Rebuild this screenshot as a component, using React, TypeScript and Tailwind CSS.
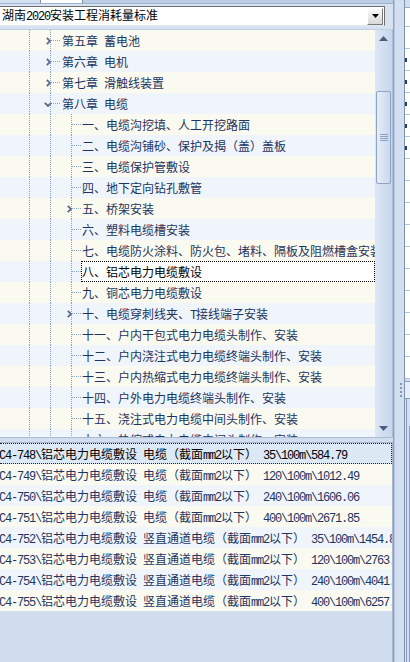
import React from 'react';

const FONT = "font-['Noto_Sans_CJK_SC','Noto_Sans_CJK_JP',sans-serif]";

function Mixed({ t }: { t: string }) {
  const parts = t.split(/([\x20-\x7E]+)/).filter((p) => p.length > 0);
  return (
    <>
      {parts.map((p, i) =>
        /^[\x20-\x7E]+$/.test(p) ? (
          <span key={i} className="font-['Liberation_Mono',monospace] text-[12px] tracking-[-1.2px]">
            {p}
          </span>
        ) : (
          <span key={i}>{p}</span>
        )
      )}
    </>
  );
}

type TRow = { l: 1 | 2; t: string; e?: 'r' | 'd'; sel?: boolean };

const treeRows: TRow[] = [
  { l: 1, t: '第五章 蓄电池', e: 'r' },
  { l: 1, t: '第六章 电机', e: 'r' },
  { l: 1, t: '第七章 滑触线装置', e: 'r' },
  { l: 1, t: '第八章 电缆', e: 'd' },
  { l: 2, t: '一、电缆沟挖填、人工开挖路面' },
  { l: 2, t: '二、电缆沟铺砂、保护及揭（盖）盖板' },
  { l: 2, t: '三、电缆保护管敷设' },
  { l: 2, t: '四、地下定向钻孔敷管' },
  { l: 2, t: '五、桥架安装', e: 'r' },
  { l: 2, t: '六、塑料电缆槽安装' },
  { l: 2, t: '七、电缆防火涂料、防火包、堵料、隔板及阻燃槽盒安装' },
  { l: 2, t: '八、铝芯电力电缆敷设', sel: true },
  { l: 2, t: '九、铜芯电力电缆敷设' },
  { l: 2, t: '十、电缆穿刺线夹、T接线端子安装', e: 'r' },
  { l: 2, t: '十一、户内干包式电力电缆头制作、安装' },
  { l: 2, t: '十二、户内浇注式电力电缆终端头制作、安装' },
  { l: 2, t: '十三、户内热缩式电力电缆终端头制作、安装' },
  { l: 2, t: '十四、户外电力电缆终端头制作、安装' },
  { l: 2, t: '十五、浇注式电力电缆中间头制作、安装' },
  { l: 2, t: '十六、热缩式电力电缆中间头制作、安装' },
];

const listItems: [string, string, string][] = [
  ['C4-748', '电缆（截面mm2以下）', '35\\100m\\584.79'],
  ['C4-749', '电缆（截面mm2以下）', '120\\100m\\1012.49'],
  ['C4-750', '电缆（截面mm2以下）', '240\\100m\\1606.06'],
  ['C4-751', '电缆（截面mm2以下）', '400\\100m\\2671.85'],
  ['C4-752', '竖直通道电缆（截面mm2以下）', '35\\100m\\1454.88'],
  ['C4-753', '竖直通道电缆（截面mm2以下）', '120\\100m\\2763.15'],
  ['C4-754', '竖直通道电缆（截面mm2以下）', '240\\100m\\4041.62'],
  ['C4-755', '竖直通道电缆（截面mm2以下）', '400\\100m\\6257.34'],
];

const DOT = 'border-[#8aa1c6] border-dotted';

function VLine() {
  return <div className={`absolute left-[10px] top-0 bottom-0 border-l ${DOT}`} />;
}
function HLine() {
  return <div className={`absolute left-[11px] right-[1px] top-[10px] border-t ${DOT}`} />;
}
function Expander({ e }: { e?: 'r' | 'd' }) {
  if (e === 'r')
    return (
      <svg className="absolute left-[6px] top-[7px]" width="5" height="8" viewBox="0 0 5 8">
        <path d="M0.8 0.8 L4 4 L0.8 7.2" stroke="#5a6b8c" strokeWidth="1.8" fill="none" />
      </svg>
    );
  if (e === 'd')
    return (
      <svg className="absolute left-[4px] top-[9px]" width="8" height="5" viewBox="0 0 8 5">
        <path d="M0.8 0.8 L4 4 L7.2 0.8" stroke="#5a6b8c" strokeWidth="1.8" fill="none" />
      </svg>
    );
  return null;
}

function TreeRow({ r, i }: { r: TRow; i: number }) {
  const bg = i % 2 === 0 ? 'bg-[#fbfaf1]' : 'bg-[#f0f4fb]';
  return (
    <div className={`flex h-[21px] shrink-0 ${bg}`}>
      <div className="w-[19px] shrink-0" />
      <div className="relative w-[21px] shrink-0">
        <VLine />
      </div>
      <div className="relative w-[21px] shrink-0">
        <VLine />
        {r.l === 1 && (
          <>
            <HLine />
            <Expander e={r.e} />
          </>
        )}
      </div>
      {r.l === 2 && (
        <div className="relative w-[21px] shrink-0">
          <VLine />
          <HLine />
          <Expander e={r.e} />
        </div>
      )}
      {r.sel ? (
        <div className="flex-1 -ml-px h-full bg-white border border-dotted border-black text-black leading-[19px] whitespace-nowrap">
          <Mixed t={r.t} />
        </div>
      ) : (
        <div className={`${r.l === 1 ? 'pl-px' : ''} leading-[21px] whitespace-nowrap text-[#1d3560]`}>
          <Mixed t={r.t} />
        </div>
      )}
    </div>
  );
}

function ScrollBar() {
  return (
    <div className="w-[17px] shrink-0 h-full flex flex-col bg-gradient-to-r from-[#dde7f5] to-[#c6d6eb]">
      <div className="h-[17px] flex items-center justify-center">
        <svg width="9" height="5" viewBox="0 0 9 5">
          <polygon points="4.5,0 9,5 0,5" fill="#4c5e80" />
        </svg>
      </div>
      <div className="h-[44px]" />
      <div className="h-[93px] mx-px rounded-[2px] border border-[#8ca4c6] bg-gradient-to-r from-[#e6eef9] to-[#c9d8ed] flex flex-col items-center justify-center gap-[1px]">
        <div className="w-[8px] h-px bg-[#8ca0c0]" />
        <div className="w-[8px] h-px bg-[#8ca0c0]" />
        <div className="w-[8px] h-px bg-[#8ca0c0]" />
        <div className="w-[8px] h-px bg-[#8ca0c0]" />
      </div>
      <div className="flex-1" />
      <div className="h-[17px] flex items-center justify-center">
        <svg width="9" height="5" viewBox="0 0 9 5">
          <polygon points="0,0 9,0 4.5,5" fill="#4c5e80" />
        </svg>
      </div>
    </div>
  );
}

function ListRow({ it, i }: { it: [string, string, string]; i: number }) {
  const sel = i === 0;
  const cls = sel
    ? 'bg-[#dde8f5] border-t border-b border-r border-dotted border-[#222] text-black leading-[19px]'
    : `${i % 2 === 1 ? 'bg-[#fbfaf1]' : 'bg-[#f0f4fb]'} text-[#1d3560] leading-[21px]`;
  const text = `${it[0]}\\铝芯电力电缆敷设 ${it[1]} ${it[2]}`;
  return (
    <div className={`h-[21px] shrink-0 overflow-hidden whitespace-nowrap ${cls}`}>
      <div className="-ml-px">
        <Mixed t={text} />
      </div>
    </div>
  );
}

function RightStrip() {
  const rows = Array.from({ length: 16 });
  return (
    <div className="w-[16px] shrink-0 flex">
      <div className="w-[10px] shrink-0 bg-[#d3dff0] border-l border-[#b4c5dd] flex flex-col">
        <div className="h-[383px]" />
        <div className="flex flex-col items-center gap-[2px] pl-[3px]">
          <div className="w-[2px] h-[2px] bg-[#8296b6]" />
          <div className="w-[2px] h-[2px] bg-[#8296b6]" />
          <div className="w-[2px] h-[2px] bg-[#8296b6]" />
          <div className="w-[2px] h-[2px] bg-[#8296b6]" />
        </div>
      </div>
      <div className="w-[6px] shrink-0 flex flex-col border-l border-[#7f92b0] bg-[#d3dff0]">
        <div className="h-[7px]" />
        <div className="bg-white border-t border-[#9aaabf] flex flex-col">
          <div className="h-[19px] border-b border-[#b9c5d6]" />
          {rows.map((_, k) => (
            <div key={k} className="h-[22px] border-b border-[#b9c5d6] flex items-center">
              {k >= 1 && k <= 5 && <div className="w-[2px] h-[4px] bg-[#2a3d60]" />}
            </div>
          ))}
        </div>
        <div className="h-[18px] mt-[2px] border-t border-b border-[#8a9cb8] bg-[#e8eef7]" />
        <div className="flex-1 ml-px border-l border-[#8a9cb8] flex flex-col">
          <div className="h-[27px]" />
          <div className="flex-1 ml-[2px] border-l border-t border-[#8a9cb8] bg-[#eef3fa]" />
        </div>
      </div>
    </div>
  );
}

export default function App() {
  return (
    <div className={`w-[410px] h-[662px] flex bg-[#d0ddef] overflow-hidden text-[12px] ${FONT}`}>
      <div className="w-[394px] shrink-0 flex flex-col border-r border-[#8ea2c2]">
        <div className="h-[3px] shrink-0 flex bg-[#c3d3ea]">
          <div className="w-[40px] bg-[#d5e0f0]" />
          <div className="w-[43px] bg-white border-x border-[#7d8da8]" />
          <div className="flex-1 bg-[#bccde6]" />
        </div>
        <div className="h-[26px] shrink-0 border-t border-[#9fb2cf] bg-[#d6e2f2]">
          <div className="mt-[2px] -ml-[2px] w-[387px] h-[20px] border border-[#6e6e6e] border-b-[#e4e9f1] bg-white flex items-center">
            <div className="flex-1 pl-[3px] text-black whitespace-nowrap leading-[18px]">
              <Mixed t="湖南2020安装工程消耗量标准" />
            </div>
            <div className="w-[16px] h-[17px] mr-px flex items-center justify-center bg-gradient-to-b from-[#fafafa] to-[#d8d8d8] border border-t-white border-l-white border-r-[#7a7a7a] border-b-[#7a7a7a]">
              <svg width="7" height="4" viewBox="0 0 7 4">
                <polygon points="0,0 7,0 3.5,4" fill="#000" />
              </svg>
            </div>
          </div>
        </div>
        <div className="h-[409px] shrink-0 flex border-t border-b border-r border-[#aabcd6] border-t-[#c2cfe0]">
          <div className="flex-1 flex flex-col overflow-hidden">
            {treeRows.map((r, i) => (
              <TreeRow key={i} r={r} i={i} />
            ))}
          </div>
          <ScrollBar />
        </div>
        <div className="h-[4px] shrink-0" />
        <div className="flex-1 flex flex-col border-t border-r border-[#a4b6d0] overflow-hidden">
          {listItems.map((it, i) => (
            <ListRow key={i} it={it} i={i} />
          ))}
        </div>
      </div>
      <RightStrip />
    </div>
  );
}
